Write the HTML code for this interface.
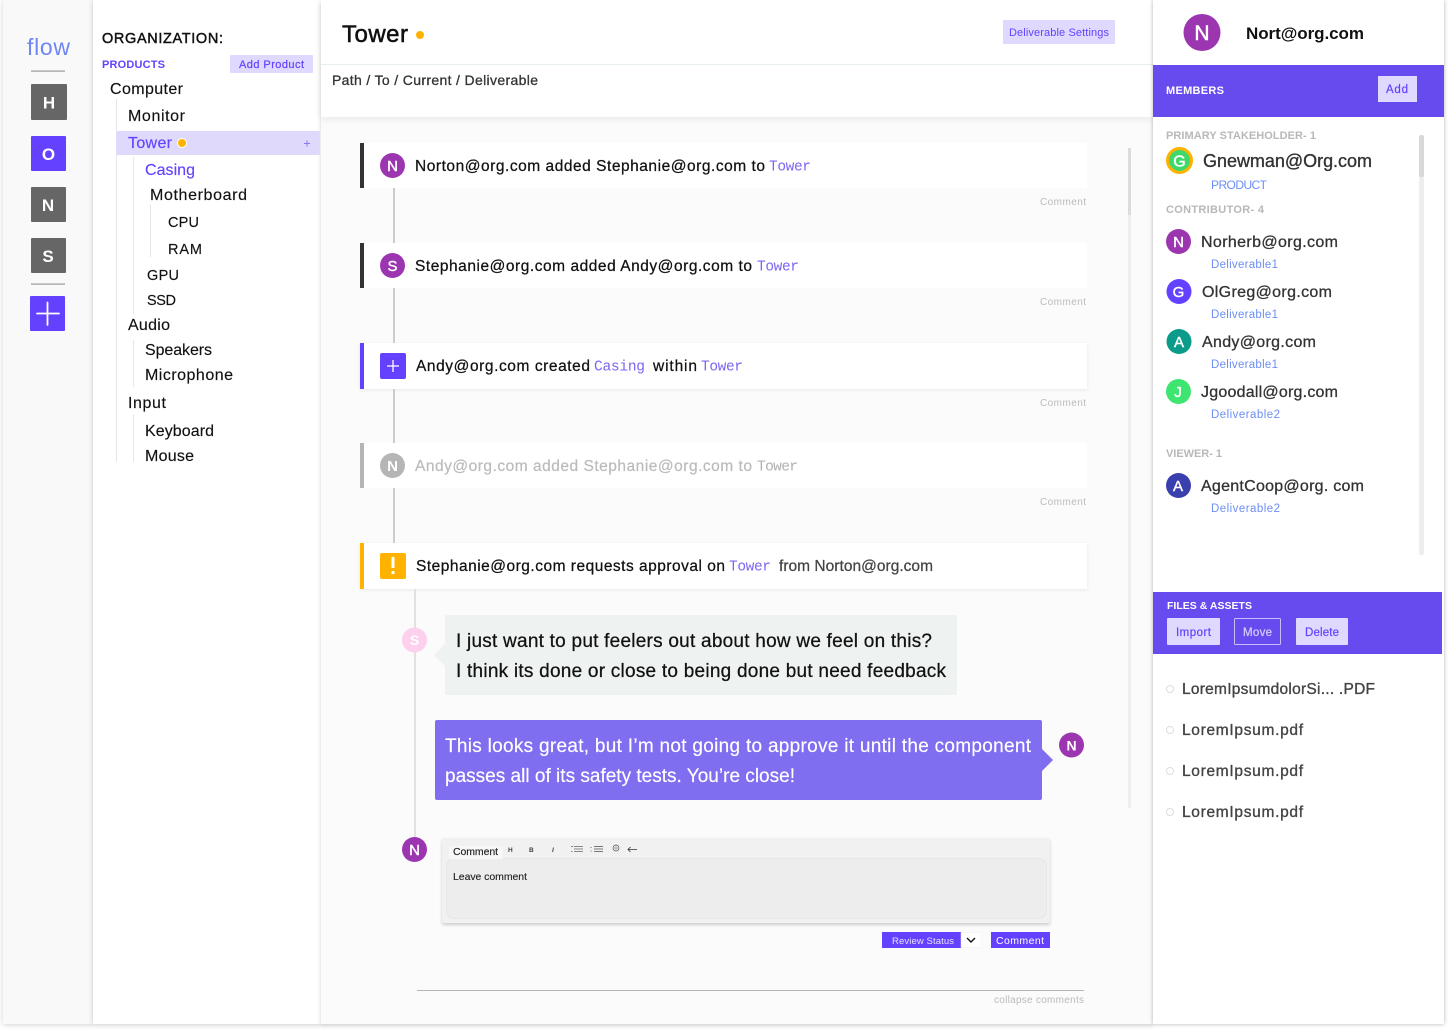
<!DOCTYPE html>
<html><head><meta charset="utf-8"><style>
html,body{margin:0;padding:0;background:#fff;width:1448px;height:1032px;overflow:hidden}
.b{position:absolute;box-sizing:border-box}
svg{position:absolute;left:0;top:0}
text{font-family:"Liberation Sans",sans-serif;white-space:pre}
.m{font-family:"Liberation Mono",monospace;fill:#7a66f2}
.k{fill:#111;stroke:#111;stroke-width:.25}
.tree{font-size:16px;fill:#111;stroke:#111;stroke-width:.15}
.up{font-size:14.5px}
.ev{font-size:15.5px}
.cm{font-size:10px;fill:#bbb}
.sec{font-size:11px;font-weight:bold;fill:#b8b8b8}
.nm{font-size:16px;fill:#333;stroke:#333;stroke-width:.3}
.dl{font-size:11.5px;fill:#6b8ff5}
.f{font-size:15.5px;fill:#444;stroke:#444;stroke-width:.35}
.av{font-weight:bold;fill:#fff;text-anchor:middle}
</style></head><body>
<div class="b" style="left:3px;top:0;width:90px;height:1024px;background:#f9f9f9;box-shadow:0 1px 5px rgba(0,0,0,.18)"></div>
<div class="b" style="left:93px;top:0;width:228px;height:1024px;background:#fff;box-shadow:0 1px 5px rgba(0,0,0,.2)"></div>
<div class="b" style="left:321px;top:0;width:832px;height:1024px;background:#fbfbfb;box-shadow:0 2px 4px rgba(0,0,0,.18)"></div>
<div class="b" style="left:321px;top:0;width:832px;height:117px;background:#fff;box-shadow:0 2px 8px rgba(0,0,0,.08)"></div>
<div class="b" style="left:321px;top:64px;width:832px;height:1px;background:#e6eeee"></div>
<div class="b" style="left:1153px;top:0;width:291px;height:1024px;background:#fff;box-shadow:0 0 4px rgba(0,0,0,.3)"></div>
<div class="b" style="left:1003px;top:20px;width:112px;height:24px;background:#e0d9ff;border-radius:1px"></div>

<div class="b" style="left:360px;top:143px;width:727px;height:45px;background:#fff;border-left:4px solid #333"></div>
<div class="b" style="left:360px;top:243px;width:727px;height:45px;background:#fff;border-left:4px solid #333"></div>
<div class="b" style="left:360px;top:343px;width:727px;height:46px;background:#fff;border-left:4px solid #6441ff;box-shadow:0 1px 4px rgba(0,0,0,.08)"></div>
<div class="b" style="left:360px;top:443px;width:727px;height:45px;background:#fff;border-left:4px solid #b5b5b5"></div>
<div class="b" style="left:360px;top:543px;width:727px;height:46px;background:#fff;border-left:4px solid #ffb300;box-shadow:0 1px 4px rgba(0,0,0,.08)"></div>

<div class="b" style="left:445px;top:615px;width:512px;height:80px;background:#eef2f1;border-radius:2px"></div>
<div class="b" style="left:435px;top:720px;width:607px;height:80px;background:#806ef0;border-radius:2px"></div>

<div class="b" style="left:442px;top:838px;width:608px;height:85px;background:#f1f1f1;border-radius:2px;box-shadow:0 2px 3px rgba(0,0,0,.18)"></div>
<div class="b" style="left:446px;top:858px;width:601px;height:61px;background:#ededed;border-radius:8px;border:1px solid #e6e6e6"></div>
<div class="b" style="left:449px;top:846px;width:54px;height:13px;background:#f7f7f7;border-radius:2px 2px 0 0"></div>

<svg width="1448" height="1032" viewBox="0 0 1448 1032">
<!-- rail -->
<text x="27" y="55" font-size="23" fill="#6f86f2" textLength="43">flow</text>
<rect x="31" y="70.5" width="34" height="1.2" fill="#999"/>
<rect x="31" y="84" width="36" height="36" rx="1" fill="#666"/>
<rect x="31" y="136" width="35" height="35" rx="1" fill="#6441ff"/>
<rect x="31" y="187" width="35" height="35" rx="1" fill="#666"/>
<rect x="31" y="238" width="35" height="35" rx="1" fill="#666"/>
<text class="av" x="49" y="108.500" font-size="17">H</text>
<text class="av" x="48.500" y="160" font-size="17">O</text>
<text class="av" x="48" y="211" font-size="17">N</text>
<text class="av" x="48" y="262" font-size="17">S</text>
<rect x="31" y="283.500" width="34" height="1.200" fill="#999"/>
<rect x="30" y="296" width="35" height="35" rx="1" fill="#6441ff"/>
<path d="M47.500 302.500V325M37 313.500H59" stroke="#fff" stroke-width="1.800" stroke-linecap="round" fill="none"/>

<!-- sidebar -->
<text x="102" y="43" font-size="14.500" class="k" style="stroke-width:.45" textLength="121">ORGANIZATION:</text>
<text x="102" y="68" font-size="11" font-weight="bold" fill="#6441ff" textLength="63">PRODUCTS</text>
<rect x="230" y="55" width="83" height="18" rx="1" fill="#e0d9ff"/>
<text x="239" y="68" font-size="11" fill="#6441ff" stroke="#6441ff" stroke-width=".2" textLength="65">Add Product</text>
<g fill="#e6e6e6">
<rect x="116" y="99" width="1" height="363"/>
<rect x="133" y="157" width="1" height="157"/>
<rect x="150" y="205" width="1" height="52"/>
<rect x="133" y="340" width="1" height="47"/>
<rect x="133" y="415" width="1" height="47"/>
</g>
<rect x="116" y="131" width="204" height="24" fill="#dfd9fb"/>
<text class="tree" x="110" y="94" textLength="73">Computer</text>
<text class="tree" x="128" y="121" textLength="57">Monitor</text>
<text class="tree" x="128" y="148" style="fill:#6441ff;stroke:#6441ff" textLength="44">Tower</text>
<circle cx="182" cy="143" r="4.500" fill="#ffb300" stroke="#fff" stroke-width="1"/>
<path d="M307 140.500v6M304 143.500h6" stroke="#8d78f5" stroke-width="1" fill="none"/>
<text class="tree" x="145" y="175" style="fill:#6441ff;stroke:#6441ff" textLength="50">Casing</text>
<text class="tree" x="150" y="200" textLength="97">Motherboard</text>
<text class="tree up" x="168" y="227" textLength="31">CPU</text>
<text class="tree up" x="168" y="254" textLength="34">RAM</text>
<text class="tree up" x="147" y="280" textLength="32">GPU</text>
<text class="tree up" x="147" y="305" textLength="29">SSD</text>
<text class="tree" x="128" y="330" textLength="42">Audio</text>
<text class="tree" x="145" y="355" textLength="67">Speakers</text>
<text class="tree" x="145" y="380" textLength="88">Microphone</text>
<text class="tree" x="128" y="408" textLength="38">Input</text>
<text class="tree" x="145" y="436" textLength="69">Keyboard</text>
<text class="tree" x="145" y="461" textLength="49">Mouse</text>

<!-- header -->
<text x="342" y="42" font-size="24" class="k" style="stroke-width:.55" textLength="66">Tower</text>
<circle cx="420" cy="35" r="4" fill="#ffb300"/>
<text x="1009" y="36" font-size="11" fill="#6441ff" textLength="100">Deliverable Settings</text>
<text x="332" y="85" font-size="14" fill="#333" stroke="#333" stroke-width=".3" textLength="206">Path / To / Current / Deliverable</text>

<!-- timeline -->
<g fill="#cfcbcb">
<rect x="393" y="188" width="2" height="55"/>
<rect x="393" y="288" width="2" height="55"/>
<rect x="393" y="389" width="2" height="54"/>
<rect x="393" y="488" width="2" height="55"/>
</g>
<rect x="414" y="589" width="2" height="250" fill="#e2e0e0"/>
<rect x="1128" y="148" width="3" height="660" fill="#eeeeee"/>
<rect x="1128" y="148" width="3" height="67" fill="#dcdcdc"/>

<circle cx="392.500" cy="165.500" r="12.500" fill="#9c36b0"/>
<text class="av" x="392.500" y="171" font-size="15" style="font-weight:normal;stroke:#fff;stroke-width:.4">N</text>
<text class="ev k" x="415" y="171" textLength="350">Norton@org.com added Stephanie@org.com to</text>
<text class="m" x="769" y="170.500" font-size="14.500" textLength="42">Tower</text>
<text class="cm" x="1040" y="205" textLength="46">Comment</text>

<circle cx="392.500" cy="265.500" r="12.500" fill="#9c36b0"/>
<text class="av" x="392.500" y="271" font-size="15" style="font-weight:normal;stroke:#fff;stroke-width:.4">S</text>
<text class="ev k" x="415" y="271" textLength="337">Stephanie@org.com added Andy@org.com to</text>
<text class="m" x="757" y="270.500" font-size="14.500" textLength="42">Tower</text>
<text class="cm" x="1040" y="305" textLength="46">Comment</text>

<rect x="380" y="353" width="26" height="26" rx="2" fill="#6441ff"/>
<path d="M393 360v12M387 366h12" stroke="#fff" stroke-width="1.300" fill="none"/>
<text class="ev k" x="416" y="371" textLength="174">Andy@org.com created</text>
<text class="m" x="594" y="370.500" font-size="14.500" textLength="51">Casing</text>
<text class="ev k" x="653" y="371" textLength="44">within</text>
<text class="m" x="701" y="370.500" font-size="14.500" textLength="42">Tower</text>
<text class="cm" x="1040" y="406" textLength="46">Comment</text>

<circle cx="392.500" cy="465.500" r="12.500" fill="#b5b5b5"/>
<text class="av" x="392.500" y="471" font-size="15">N</text>
<text class="ev" x="415" y="471" fill="#bbb" stroke="#bbb" stroke-width=".2" textLength="337">Andy@org.com added Stephanie@org.com to</text>
<text class="m" x="757" y="470.500" font-size="14.500" style="fill:#b0b0b0" textLength="41">Tower</text>
<text class="cm" x="1040" y="505" textLength="46">Comment</text>

<rect x="380" y="553" width="26" height="26" rx="2" fill="#ffb300"/>
<path d="M393 557v11" stroke="#fff" stroke-width="3" fill="none"/>
<rect x="391.500" y="571" width="3" height="3" fill="#fff"/>
<text class="ev k" x="416" y="571" textLength="309">Stephanie@org.com requests approval on</text>
<text class="m" x="729" y="570.500" font-size="14.500" textLength="42">Tower</text>
<text class="ev" x="779" y="571" fill="#444" stroke="#444" stroke-width=".25" textLength="154">from Norton@org.com</text>

<!-- bubbles -->
<circle cx="414.500" cy="640" r="12.500" fill="#fdd0ee"/>
<text class="av" x="414.500" y="645" font-size="14">S</text>
<path d="M445 644L434 655L445 666Z" fill="#eef2f1"/>
<text x="456" y="647" font-size="19" class="k" textLength="476">I just want to put feelers out about how we feel on this?</text>
<text x="456" y="677" font-size="19" class="k" textLength="490">I think its done or close to being done but need feedback</text>
<path d="M1042 749L1053 760L1042 771Z" fill="#806ef0"/>
<text x="445" y="752" font-size="19" fill="#fff" stroke="#fff" stroke-width=".15" textLength="586">This looks great, but I’m not going to approve it until the component</text>
<text x="445" y="782" font-size="19" fill="#fff" stroke="#fff" stroke-width=".15" textLength="350">passes all of its safety tests. You’re close!</text>
<circle cx="1071.500" cy="745" r="12.500" fill="#9c36b0"/>
<text class="av" x="1071.500" y="750.500" font-size="14">N</text>

<!-- comment box -->
<circle cx="414.500" cy="849.500" r="12.500" fill="#9c36b0"/>
<text class="av" x="414.500" y="855" font-size="15" style="font-weight:normal;stroke:#fff;stroke-width:.4">N</text>
<text x="453" y="855" font-size="10.500" fill="#222" stroke="#222" stroke-width=".15" textLength="45">Comment</text>
<text x="508" y="852" font-size="6.500" font-weight="bold" fill="#444">H</text>
<text x="529" y="852" font-size="6.500" font-weight="bold" fill="#444">B</text>
<text x="552" y="852" font-size="6.500" font-style="italic" font-weight="bold" fill="#444">I</text>
<path d="M574 846.500h9M574 849h9M574 851.500h9M571 846.500h2M571 851.500h1.500" stroke="#666" stroke-width=".8" fill="none"/>
<path d="M594 846.500h9M594 849h9M594 851.500h9M591 847v1M591 850.500v1" stroke="#777" stroke-width="1" fill="none"/>
<circle cx="616" cy="848" r="3" fill="none" stroke="#555" stroke-width=".7"/><circle cx="616" cy="848" r="1.200" fill="none" stroke="#555" stroke-width=".5"/>
<path d="M637 849.500h-9M630.500 847l-2.500 2.500l2.500 2.500" stroke="#333" stroke-width=".8" fill="none"/>
<text x="453" y="880" font-size="10.500" fill="#222" stroke="#222" stroke-width=".12" textLength="74">Leave comment</text>

<rect x="882" y="932" width="79" height="16" fill="#6441ff"/>
<rect x="961" y="932.500" width="20" height="15" fill="#fff" stroke="#eee" stroke-width=".5"/>
<path d="M967 938l4 4l4-4" stroke="#111" stroke-width="1.400" fill="none"/>
<text x="892" y="944" font-size="9.500" fill="#e6e1ff" textLength="62">Review Status</text>
<rect x="991" y="932" width="59" height="16" fill="#6441ff"/>
<text x="996" y="944" font-size="10.500" fill="#fff" textLength="48">Comment</text>
<rect x="417" y="990" width="667" height="1" fill="#b5b5b5"/>
<text x="994" y="1003" font-size="10" fill="#bbb" textLength="90">collapse comments</text>

<!-- right panel -->
<circle cx="1202" cy="32.500" r="18.500" fill="#9c36b0"/>
<text class="av" x="1202" y="40" font-size="21" style="font-weight:normal;stroke:#fff;stroke-width:.5">N</text>
<text x="1246" y="39" font-size="17" font-weight="bold" fill="#111" textLength="118">Nort@org.com</text>
<rect x="1153" y="65" width="291" height="52" fill="#674bef"/>
<text x="1166" y="94" font-size="11" font-weight="bold" fill="#fff" textLength="58">MEMBERS</text>
<rect x="1378" y="76" width="39" height="26" fill="#e0d9ff"/>
<text x="1386" y="93" font-size="11.500" fill="#6441ff" stroke="#6441ff" stroke-width=".2" textLength="22">Add</text>

<rect x="1419" y="135" width="5" height="420" rx="2" fill="#eeeeee"/>
<rect x="1419" y="135" width="5" height="42" rx="2" fill="#d8d8d8"/>

<text class="sec" x="1166" y="139" textLength="150">PRIMARY STAKEHOLDER- 1</text>
<circle cx="1179.500" cy="160.500" r="12" fill="#3fd96b" stroke="#ffb300" stroke-width="3"/>
<text class="av" x="1179.500" y="166.500" font-size="16" style="font-weight:normal;stroke:#fff;stroke-width:.5">G</text>
<text x="1203" y="167" font-size="18" fill="#333" stroke="#333" stroke-width=".35" textLength="169">Gnewman@Org.com</text>
<text x="1211" y="189" font-size="12" fill="#6b8ff5" textLength="56">PRODUCT</text>
<text class="sec" x="1166" y="213" textLength="98">CONTRIBUTOR- 4</text>

<circle cx="1178.500" cy="241.500" r="12.500" fill="#9c36b0"/>
<text class="av" x="1178.500" y="247" font-size="15" style="font-weight:normal;stroke:#fff;stroke-width:.4">N</text>
<text class="nm" x="1201" y="247" textLength="137">Norherb@org.com</text>
<text class="dl" x="1211" y="268" textLength="67">Deliverable1</text>

<circle cx="1179" cy="291.500" r="12.500" fill="#6441ff"/>
<text class="av" x="1178.500" y="297" font-size="15" style="font-weight:normal;stroke:#fff;stroke-width:.4">G</text>
<text class="nm" x="1202" y="297" textLength="130">OlGreg@org.com</text>
<text class="dl" x="1211" y="318" textLength="67">Deliverable1</text>

<circle cx="1179" cy="341.500" r="12.500" fill="#0b9b8a"/>
<text class="av" x="1179" y="347" font-size="15" style="font-weight:normal;stroke:#fff;stroke-width:.4">A</text>
<text class="nm" x="1202" y="347" textLength="114">Andy@org.com</text>
<text class="dl" x="1211" y="368" textLength="67">Deliverable1</text>

<circle cx="1178.500" cy="391.500" r="12.500" fill="#3fe571"/>
<text class="av" x="1178" y="397" font-size="15" style="font-weight:normal;stroke:#fff;stroke-width:.4">J</text>
<text class="nm" x="1201" y="397" textLength="137">Jgoodall@org.com</text>
<text class="dl" x="1211" y="418" textLength="69">Deliverable2</text>

<text class="sec" x="1166" y="457" textLength="56">VIEWER- 1</text>
<circle cx="1178.500" cy="485.500" r="12.500" fill="#3a3fae"/>
<text class="av" x="1178" y="491" font-size="15" style="font-weight:normal;stroke:#fff;stroke-width:.4">A</text>
<text class="nm" x="1201" y="491" textLength="163">AgentCoop@org. com</text>
<text class="dl" x="1211" y="512" textLength="69">Deliverable2</text>

<rect x="1153" y="592" width="289" height="62" fill="#674bef"/>
<text x="1167" y="609" font-size="10.500" font-weight="bold" fill="#fff" textLength="85">FILES &amp; ASSETS</text>
<rect x="1167" y="618" width="53" height="27" rx="1" fill="#e0d9ff"/>
<text x="1176" y="636" font-size="11.500" fill="#6441ff" stroke="#6441ff" stroke-width=".2" textLength="35">Import</text>
<rect x="1234.500" y="618.500" width="46" height="26" rx="1" fill="none" stroke="#c8bdfb"/>
<text x="1243" y="636" font-size="11.500" fill="#d8d0ff" stroke="#d8d0ff" stroke-width=".2" textLength="29">Move</text>
<rect x="1296" y="618" width="52" height="27" rx="1" fill="#e0d9ff"/>
<text x="1305" y="636" font-size="11.500" fill="#6441ff" stroke="#6441ff" stroke-width=".2" textLength="34">Delete</text>

<g fill="none" stroke="#ddd"><circle cx="1170" cy="689" r="3.500"/><circle cx="1170" cy="730" r="3.500"/><circle cx="1170" cy="771" r="3.500"/><circle cx="1170" cy="812" r="3.500"/></g>
<text class="f" x="1182" y="694" textLength="193">LoremIpsumdolorSi... .PDF</text>
<text class="f" x="1182" y="735" textLength="121">LoremIpsum.pdf</text>
<text class="f" x="1182" y="776" textLength="121">LoremIpsum.pdf</text>
<text class="f" x="1182" y="817" textLength="121">LoremIpsum.pdf</text>
</svg>
</body></html>
